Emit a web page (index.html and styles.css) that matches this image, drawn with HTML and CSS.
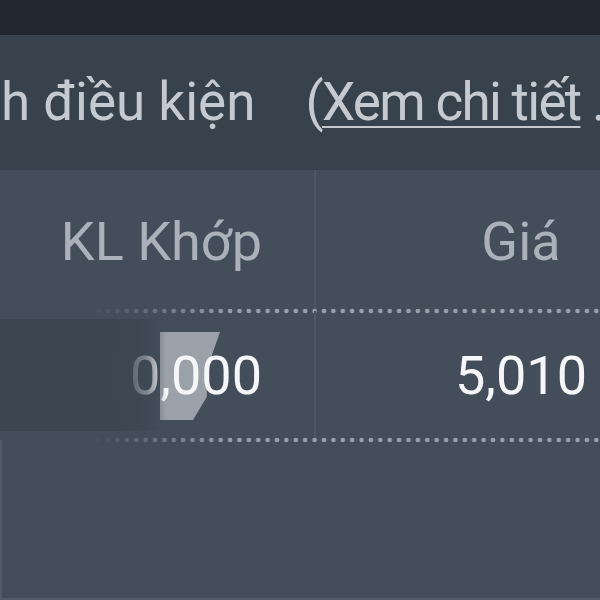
FILE: index.html
```html
<!DOCTYPE html>
<html lang="vi">
<head>
    <meta charset="UTF-8">
    <meta name="viewport" content="width=device-width, initial-scale=1.0">
    <title>Khớp lệnh</title>
    <link rel="stylesheet" href="styles.css">
</head>
<body>

<div class="screen">
    <div class="topbar"></div>

    <div class="note">
        <span class="note-text">h điều kiện</span>
        <span class="note-link">(<a href="#">Xem chi tiết</a> .</span>
    </div>

    <div class="table">
        <div class="row head">
            <div class="cell qty">KL Khớp</div>
            <div class="cell price">Giá</div>
        </div>
        <div class="row data">
            <div class="cell qty"><span class="marker"></span><span class="num">10,000</span></div>
            <div class="cell price">5,010</div>
            <div class="fade"></div>
        </div>
        <div class="rest"></div>
    </div>
</div>

</body>
</html>
```

FILE: styles.css
```css
/* Page */
body {
    margin: 0;
    background: #48535f;
    font-family: 'Roboto', 'Noto Sans', sans-serif;
}

.screen {
    width: 600px;
    height: 600px;
    overflow: hidden;
    display: flex;
    flex-direction: column;
}

.topbar {
    height: 35px;
    background: #23272f;
    flex-shrink: 0;
}

/* Note strip */
.note {
    height: 135px;
    background: #37424d;
    display: flex;
    align-items: center;
    gap: 50px;
    padding-left: 1px;
    padding-bottom: 2px;
    box-sizing: border-box;
    white-space: nowrap;
    font-size: 53px;
    color: #c5cad0;
    flex-shrink: 0;
    overflow: hidden;
}

.note-link {
    letter-spacing: -1.7px;
}

.note-link a {
    color: #c5cad0;
    text-decoration: underline;
    text-decoration-thickness: 2px;
    text-underline-offset: 6px;
}

/* Table */
.table {
    flex: 1;
    background: #434e5a;
    display: flex;
    flex-direction: column;
}

.row {
    position: relative;
    display: grid;
    grid-template-columns: 316px 410px;
    white-space: nowrap;
}

.row::after {
    content: '';
    position: absolute;
    left: 0;
    right: 0;
    bottom: -3px;
    height: 6px;
    background-image: radial-gradient(circle, #98a0a8 2px, transparent 2.6px);
    background-size: 9.4px 6px;
    -webkit-mask-image: linear-gradient(to right, transparent 90px, #000 230px);
    mask-image: linear-gradient(to right, transparent 90px, #000 230px);
}

.cell {
    display: flex;
    align-items: center;
    font-size: 54px;
}

.cell.qty {
    justify-content: flex-end;
    padding-right: 52px;
    border-right: 2px solid #4c5864;
}

.cell.price {
    justify-content: center;
}

.head {
    height: 141px;
}

.head .cell {
    color: #aab1b9;
    padding-top: 2px;
}

.data {
    height: 129px;
}

.data .cell {
    color: #f4f6f8;
}

.num {
    position: relative;
}

/* grey shape behind the first zero */
.marker {
    position: absolute;
    left: 160px;
    top: 21px;
    width: 60px;
    height: 88px;
    background: #9ba1a8;
    clip-path: polygon(0 0, 100% 0, 78% 43%, 78% 74%, 55% 100%, 0 100%);
}

.data .cell.qty {
    position: relative;
}

.fade {
    position: absolute;
    left: 0;
    top: 8px;
    width: 200px;
    height: 112px;
    background: linear-gradient(to right, #3c4651 0, #3c4651 118px, rgba(60, 70, 81, 0.6) 148px, rgba(60, 70, 81, 0) 166px);
}

.rest {
    flex: 1;
    border-left: 2px solid #4f5b67;
    border-bottom: 2px solid #4f5b67;
}
```
